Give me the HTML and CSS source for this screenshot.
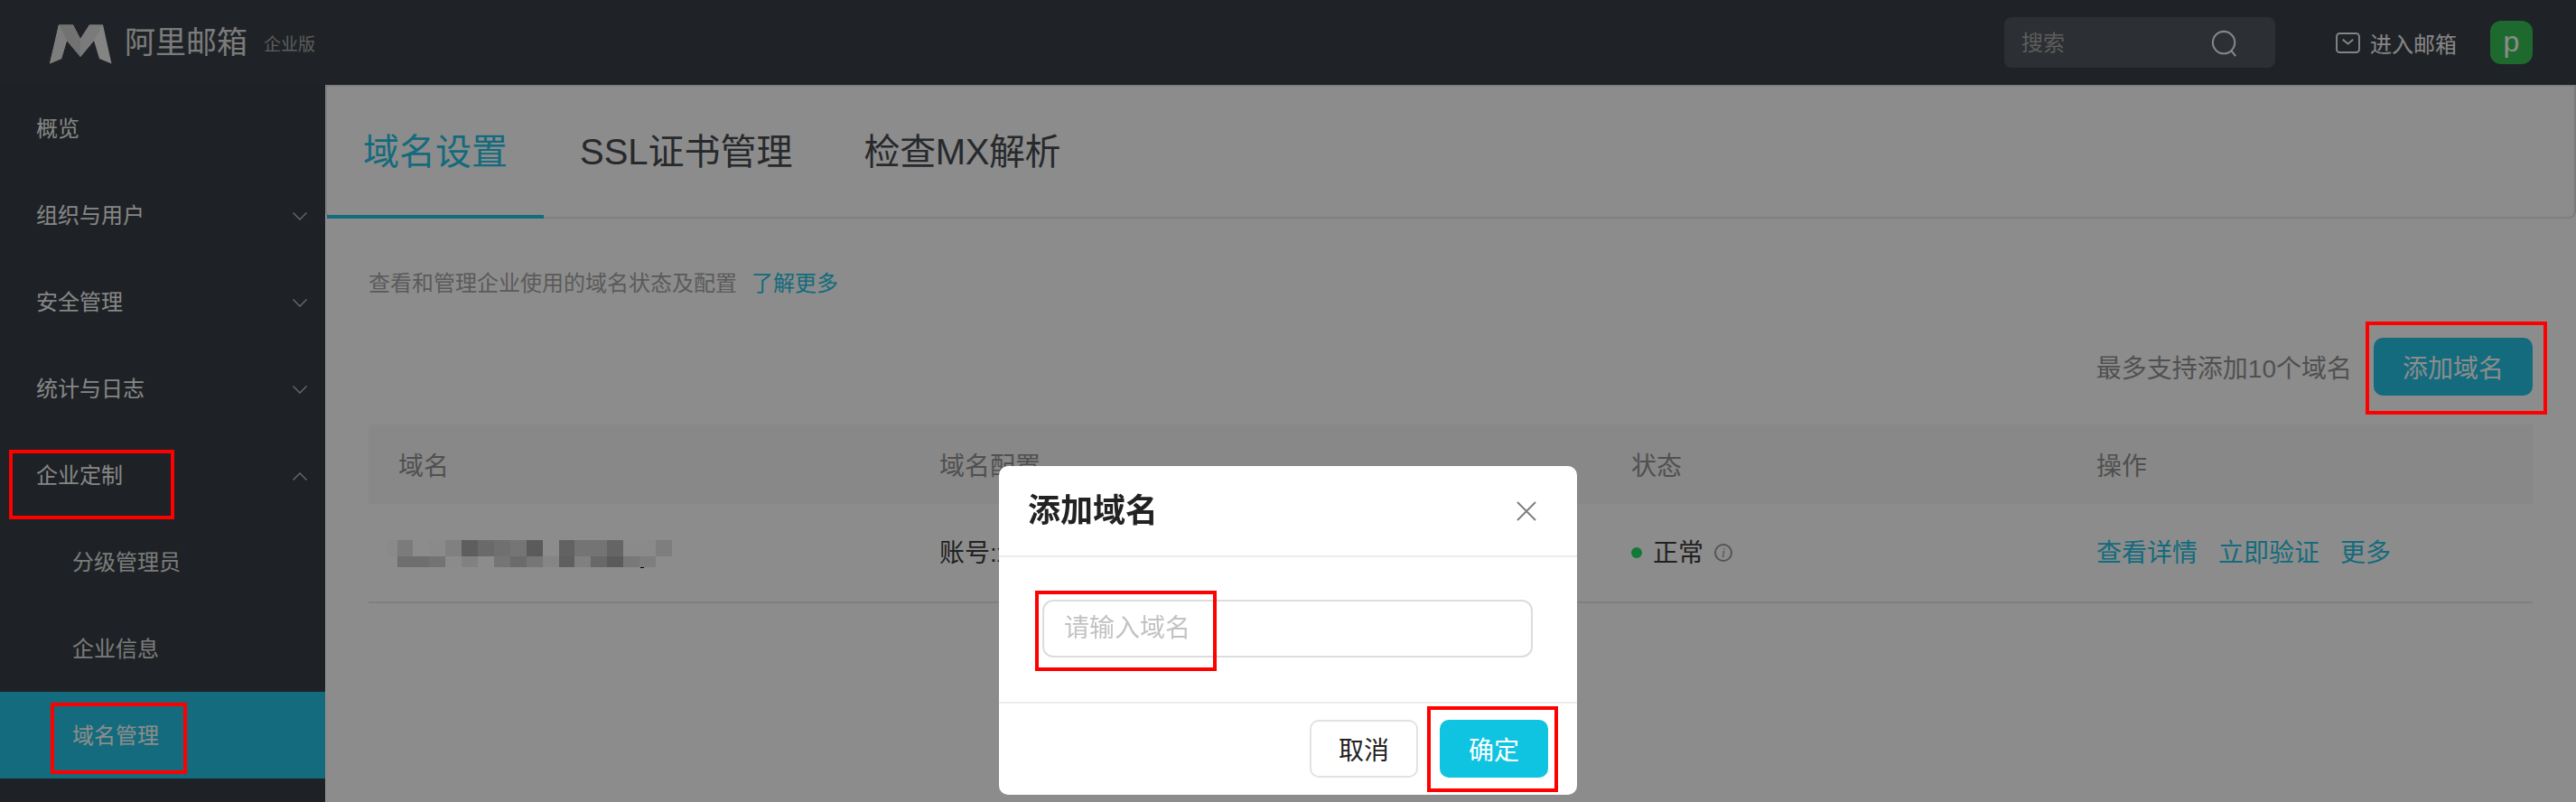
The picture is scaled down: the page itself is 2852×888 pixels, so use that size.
FILE: index.html
```html
<!DOCTYPE html>
<html lang="zh-CN">
<head>
<meta charset="utf-8">
<title>域名管理</title>
<link rel="stylesheet" href="styles.css">
</head>
<body>
<div class="app">
  <header class="topbar">
    <div class="brand">
      <svg class="brand-mark" viewBox="0 0 69 44" aria-hidden="true">
        <path fill="#f0f0f0" d="M0 43.5 10 .5H26L34 16 44 .5H59L68.5 43.5 55 38 49 18 34 36 19 18 13 38Z"/>
        <path fill="#cfcfcf" d="M10 .5H26L34 16V36L19 18 10 .5Z"/>
        <path fill="#dedede" d="M44 .5H59L49 18 34 36V16Z"/>
        <path fill="#e4e4e4" d="M10 .5 19 18 13 38 0 43.5Z"/>
      </svg>
      <span class="brand-name">阿里邮箱</span>
      <span class="brand-edition">企业版</span>
    </div>
    <div class="top-actions">
      <div class="search">
        <span class="search-text">搜索</span>
        <svg class="search-icon" viewBox="0 0 32 32" aria-hidden="true"><circle cx="15" cy="15" r="13"/><path d="M24 25 29 31"/></svg>
      </div>
      <a class="enter-mail">
        <svg class="mail-icon" viewBox="0 0 28 24" aria-hidden="true"><rect x="1" y="1" width="26" height="22" rx="3.5"/><path d="M8 8 14 13 20 8"/></svg>
        <span>进入邮箱</span>
      </a>
      <div class="avatar">p</div>
    </div>
  </header>
  <div class="main">
    <nav class="sidebar">
      <div class="nav-item">概览</div>
      <div class="nav-item">组织与用户<svg class="chev" viewBox="0 0 16 9" aria-hidden="true"><path d="M.5.5 8 8 15.500.5"/></svg></div>
      <div class="nav-item">安全管理<svg class="chev" viewBox="0 0 16 9" aria-hidden="true"><path d="M.5.5 8 8 15.500.5"/></svg></div>
      <div class="nav-item">统计与日志<svg class="chev" viewBox="0 0 16 9" aria-hidden="true"><path d="M.5.5 8 8 15.500.5"/></svg></div>
      <div class="nav-item">企业定制<svg class="chev" viewBox="0 0 16 9" aria-hidden="true"><path d="M.5 8.500 8 1 15.500 8.500"/></svg></div>
      <div class="nav-item sub">分级管理员</div>
      <div class="nav-item sub">企业信息</div>
      <div class="nav-item sub active">域名管理</div>
    </nav>
    <main class="content">
      <div class="tabs">
        <div class="tab active">域名设置</div>
        <div class="tab">SSL证书管理</div>
        <div class="tab">检查MX解析</div>
      </div>
      <div class="panel">
        <p class="desc">查看和管理企业使用的域名状态及配置<a class="more-link">了解更多</a></p>
        <div class="toolbar">
          <span class="limit">最多支持添加10个域名</span>
          <button class="btn-add">添加域名</button>
        </div>
        <div class="table">
          <div class="row head">
            <div>域名</div>
            <div>域名配置</div>
            <div>状态</div>
            <div>操作</div>
          </div>
          <div class="row body">
            <div>
              <svg class="masked" viewBox="0 0 318 31" aria-hidden="true">
                <g>
                  <rect x="0" y="0" width="12" height="18" fill="#fbfbfb"/><rect x="12" y="0" width="17" height="18" fill="#e0e0e0"/><rect x="47" y="0" width="18" height="18" fill="#fbfbfb"/><rect x="65" y="0" width="18" height="18" fill="#e9e9e9"/><rect x="83" y="0" width="18" height="18" fill="#ababab"/><rect x="101" y="0" width="18" height="18" fill="#c1c1c1"/><rect x="119" y="0" width="18" height="18" fill="#cdcdcd"/><rect x="137" y="0" width="18" height="18" fill="#d5d5d5"/><rect x="155" y="0" width="18" height="18" fill="#a7a7a7"/><rect x="191" y="0" width="17" height="18" fill="#b2b2b2"/><rect x="208" y="0" width="18" height="18" fill="#d3d3d3"/><rect x="226" y="0" width="18" height="18" fill="#d3d3d3"/><rect x="244" y="0" width="18" height="18" fill="#b9b9b9"/><rect x="262" y="0" width="18" height="18" fill="#fbfbfb"/><rect x="280" y="0" width="18" height="18" fill="#fbfbfb"/><rect x="298" y="0" width="18" height="18" fill="#e5e5e5"/>
                  <rect x="12" y="18" width="17" height="12" fill="#c8c8c8"/><rect x="29" y="18" width="18" height="12" fill="#c8c8c8"/><rect x="47" y="18" width="18" height="12" fill="#d1d1d1"/><rect x="65" y="18" width="18" height="12" fill="#fdfdfd"/><rect x="83" y="18" width="18" height="12" fill="#ececec"/><rect x="119" y="18" width="18" height="12" fill="#d5d5d5"/><rect x="137" y="18" width="18" height="12" fill="#c4c4c4"/><rect x="155" y="18" width="18" height="12" fill="#d7d7d7"/><rect x="173" y="18" width="18" height="12" fill="#f2f2f2"/><rect x="191" y="18" width="17" height="12" fill="#adadad"/><rect x="208" y="18" width="18" height="12" fill="#e9e9e9"/><rect x="226" y="18" width="18" height="12" fill="#bdbdbd"/><rect x="244" y="18" width="18" height="12" fill="#a7a7a7"/><rect x="262" y="18" width="18" height="12" fill="#dadada"/><rect x="280" y="18" width="18" height="12" fill="#e5e5e5"/>
                  <rect x="281" y="30" width="4" height="1" fill="#000"/>
                </g>
              </svg>
            </div>
            <div class="dark">账号:xxxxxxxx</div>
            <div class="status">
              <i class="dot"></i><span class="dark">正常</span><i class="info">i</i>
            </div>
            <div class="ops"><a>查看详情</a><a>立即验证</a><a>更多</a></div>
          </div>
        </div>
      </div>
    </main>
  </div>
</div>

<div class="mask">
  <section class="modal">
    <div class="modal-head">
      <h2 class="modal-title">添加域名</h2>
      <svg class="modal-close" viewBox="0 0 22 22" aria-hidden="true"><path d="M1 1 21 21M21 1 1 21"/></svg>
    </div>
    <div class="modal-body">
      <input class="domain-input" type="text" placeholder="请输入域名">
    </div>
    <div class="modal-foot">
      <button class="btn-cancel">取消</button>
      <button class="btn-ok">确定</button>
    </div>
  </section>
</div>

<div class="mark mark-custom"></div>
<div class="mark mark-domain"></div>
<div class="mark mark-add"></div>
<div class="mark mark-input"></div>
<div class="mark mark-ok"></div>
</body>
</html>
```

FILE: styles.css
```css
* { box-sizing: border-box; }
html, body { margin: 0; padding: 0; height: 100%; overflow: hidden; }
body {
  background: #fff;
  font-family: "Liberation Sans", "Noto Sans CJK SC", sans-serif;
  font-size: 28px;
  color: #939393;
}
a { cursor: pointer; }

.app { display: flex; flex-direction: column; height: 888px; }

/* top bar */
.topbar {
  flex: none;
  height: 94px;
  background: #3a4047;
  display: flex;
  align-items: center;
  justify-content: space-between;
  padding: 0 48px 0 55px;
}
.brand { display: flex; align-items: center; }
.brand-mark { width: 69px; height: 44px; margin-top: 4px; }
.brand-name { margin-left: 14px; font-size: 34px; line-height: 44px; color: #e0e0e0; white-space: nowrap; }
.brand-edition { margin-left: 18px; margin-top: 6px; font-size: 19px; line-height: 24px; color: #a8a8a8; white-space: nowrap; }
.top-actions { display: flex; align-items: center; }
.search {
  width: 300px;
  height: 56px;
  border-radius: 8px;
  background: #50575e;
  display: flex;
  align-items: center;
  justify-content: space-between;
  padding: 0 41px 4px 19px;
}
.search-text { font-size: 24px; color: #a8a8a8; }
.search-icon { width: 30px; height: 30px; fill: none; stroke: #f5f5f5; stroke-width: 2.200; margin-top: 6px; }
.enter-mail { display: flex; align-items: center; margin-left: 67px; font-size: 24px; color: #f5f5f5; }
.mail-icon { width: 27px; height: 23px; margin-right: 11px; fill: none; stroke: #f0f0f0; stroke-width: 2; }
.avatar {
  width: 47px;
  height: 48px;
  margin-left: 37px;
  border-radius: 12px;
  background: #37c254;
  color: #fff;
  font-size: 32px;
  line-height: 46px;
  text-align: center;
}

.main { flex: 1; display: flex; min-height: 0; }

/* sidebar */
.sidebar { flex: none; width: 360px; background: #383e45; }
.nav-item {
  height: 96px;
  padding: 0 20px 4px 40px;
  display: flex;
  align-items: center;
  justify-content: space-between;
  font-size: 24px;
  color: #f4f4f4;
}
.nav-item.sub { padding-left: 80px; color: #e0e0e0; }
.nav-item.active { background: #24c4e3; color: #fff; }
.chev { width: 16px; height: 9px; margin-top: 6px; fill: none; stroke: #c4c4c4; stroke-width: 1.300; }

/* content */
.content { flex: 1; min-width: 0; }
.tabs {
  display: flex;
  height: 148px;
  border: 2px solid #e8e8e8;
  border-radius: 0 0 8px 8px;
  border-right-color: #e0e0e0;
}
.tab {
  height: 146px;
  padding: 2px 40px 0;
  border-bottom: 4px solid transparent;
  font-size: 40px;
  line-height: 140px;
  color: #484b50;
  white-space: nowrap;
}
.tab:last-child { margin-left: -1px; letter-spacing: -.4px; }
.tab.active { color: #24c4e3; border-bottom-color: #24c4e3; }
.panel { padding: 0 48px; }
.desc { margin: 52px 0 0; height: 40px; font-size: 24px; line-height: 40px; color: #a6a6a6; }
.more-link { margin-left: 16px; color: #24c4e3; }
.toolbar { margin-top: 40px; display: flex; align-items: center; justify-content: flex-end; }
.limit { margin-right: 24px; color: #939393; }
.btn-add {
  width: 176px;
  height: 64px;
  border: 0;
  border-radius: 10px;
  background: #24c4e3;
  color: #fff;
  font: inherit;
}
.table { margin-top: 32px; }
.row {
  display: grid;
  grid-template-columns: 599px 766px 515px 1fr;
  align-items: center;
  padding-left: 33px;
}
.row.head { height: 88px; background: #f7f7f7; }
.row.body { height: 110px; padding-bottom: 4px; border-bottom: 2px solid #e8e8e8; overflow: hidden; }
.dark { color: #3c3c3c; white-space: nowrap; }
.masked { display: block; width: 318px; height: 31px; margin: 6px 0 0 -13px; }
.status { display: flex; align-items: center; }
.dot { width: 12px; height: 12px; border-radius: 50%; background: #22dd6a; margin: 4px 12px 0 0; }
.info {
  width: 20px;
  height: 20px;
  margin: 4px 0 0 12px;
  border: 2px solid #9a9a9a;
  border-radius: 50%;
  font-family: "Liberation Serif", serif;
  font-size: 15px;
  line-height: 16px;
  text-align: center;
  color: #9a9a9a;
}
.ops { display: flex; gap: 23px; color: #24c4e3; }

/* modal layer */
.mask {
  position: fixed;
  inset: 0;
  background: rgba(0, 0, 0, .45);
  display: flex;
  justify-content: center;
  align-items: flex-start;
}
.modal {
  width: 640px;
  height: 364px;
  margin-top: 516px;
  border-radius: 10px;
  background: #fff;
  overflow: hidden;
}
.modal-head {
  height: 101px;
  padding: 0 45px 0 32px;
  border-bottom: 2px solid #ececec;
  display: flex;
  align-items: center;
  justify-content: space-between;
}
.modal-title { margin: 0; font-size: 36px; line-height: 50px; font-weight: 700; color: #222; }
.modal-close { width: 22px; height: 22px; fill: none; stroke: #7f7f7f; stroke-width: 2; }
.modal-body { height: 160px; padding: 47px 49px 0 48px; }
.domain-input {
  display: block;
  width: 100%;
  height: 64px;
  padding: 0 22px;
  border: 2px solid #dcdcdc;
  border-radius: 12px;
  background: #fff;
  font: inherit;
  outline: 0;
}
.domain-input::placeholder { color: #c2c2c2; opacity: 1; }
.modal-foot {
  height: 103px;
  padding: 18px 32px 0 0;
  border-top: 2px solid #ececec;
  display: flex;
  justify-content: flex-end;
  align-items: flex-start;
  gap: 24px;
}
.btn-cancel, .btn-ok {
  width: 120px;
  height: 64px;
  border-radius: 10px;
  font: inherit;
}
.btn-cancel { border: 2px solid #e2e2e2; background: #fff; color: #222; }
.btn-ok { border: 0; background: #0fc4e1; color: #fff; }

/* red annotations laid over the screenshot */
.mark { position: fixed; border: 4px solid #f00; }
.mark-custom { left: 10px; top: 498px; width: 183px; height: 77px; }
.mark-domain { left: 56px; top: 778px; width: 151px; height: 79px; }
.mark-add { left: 2619px; top: 356px; width: 201px; height: 103px; }
.mark-input { left: 1146px; top: 654px; width: 201px; height: 89px; }
.mark-ok { left: 1580px; top: 782px; width: 145px; height: 95px; }
```
